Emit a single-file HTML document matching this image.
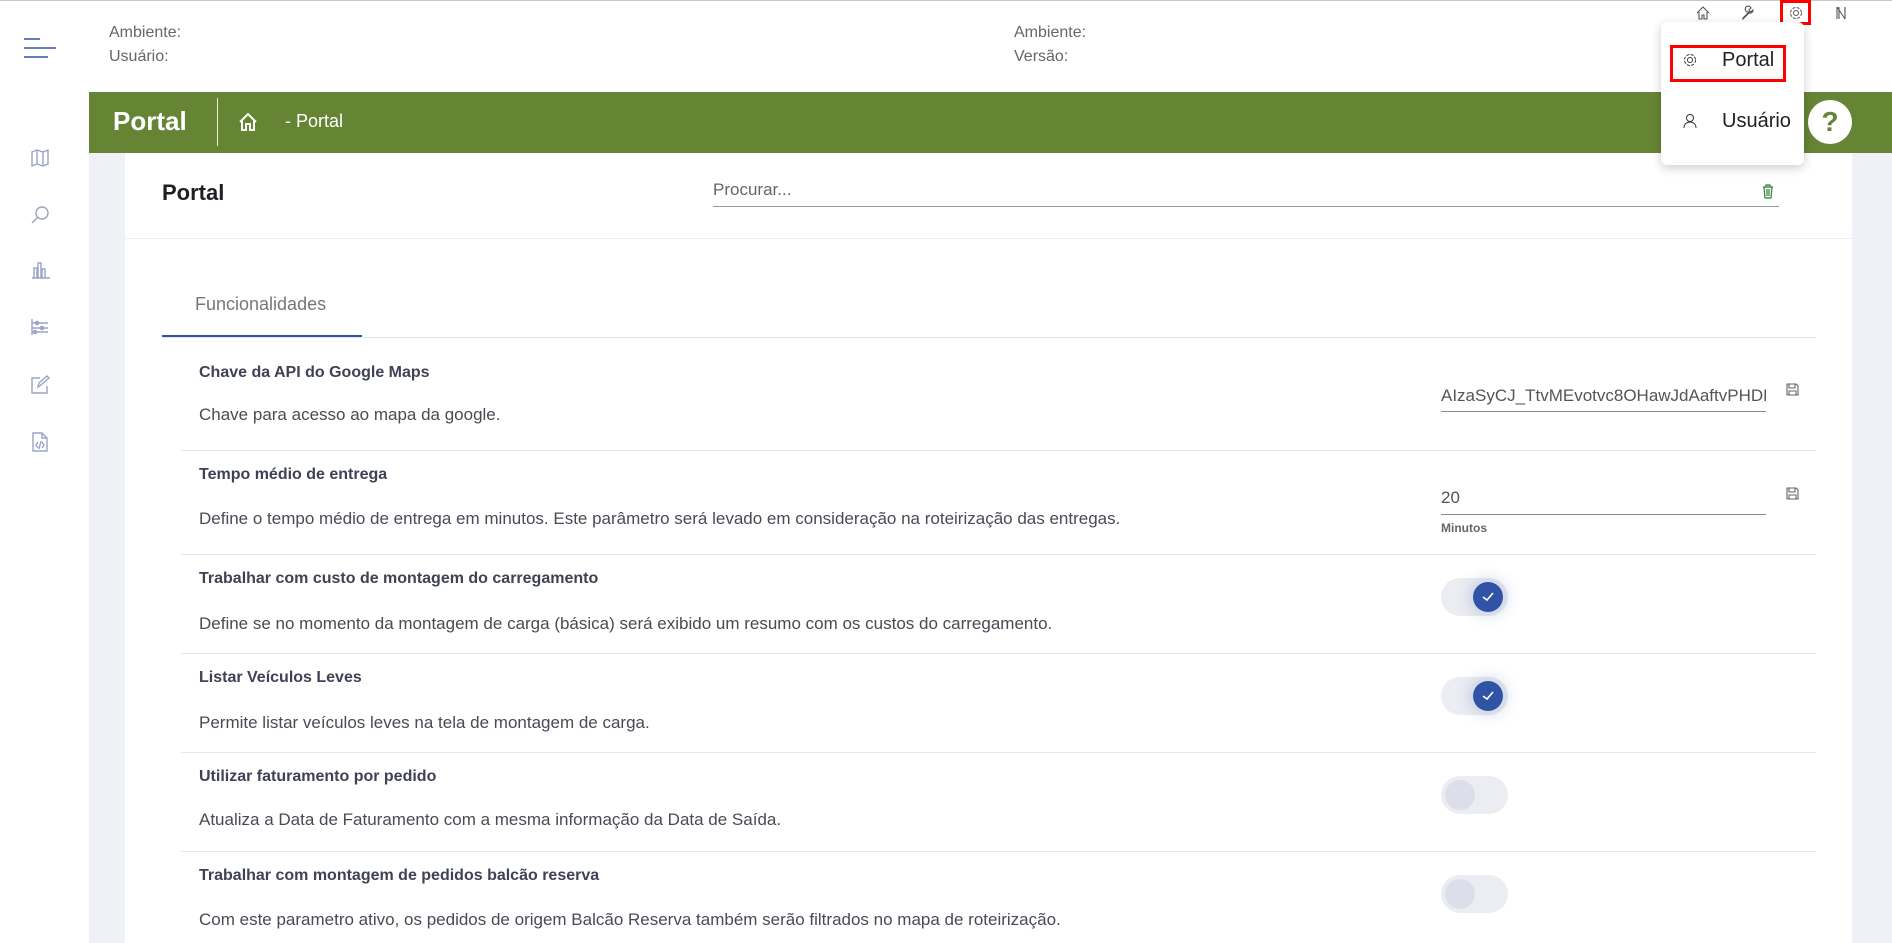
<!DOCTYPE html>
<html><head><meta charset="utf-8"><style>
*{margin:0;padding:0;box-sizing:border-box}
body{width:1892px;height:943px;overflow:hidden;background:#f0f1f6;font-family:"Liberation Sans",sans-serif;position:relative;color:#3f4254}
.a{position:absolute}
.hdr{left:0;top:0;width:1892px;height:92px;background:#fff;border-top:1px solid #c8c8c8}
.side{left:0;top:92px;width:89px;height:851px;background:#fff}
.lbl{font-size:16px;color:#666}
.green{left:89px;top:92px;width:1803px;height:61px;background:#658535}
.card{left:125px;top:153px;width:1727px;height:790px;background:#fff}
.title{font-size:16px;font-weight:bold;color:#3f4254}
.desc{font-size:17px;color:#4a4a55}
.sep{left:181px;width:1635px;height:1px;background:#e6e7ec}
.tog{width:67px;height:38px;border-radius:19px;background:#ecedf3}
.tog .k{position:absolute;top:4px;width:30px;height:30px;border-radius:50%}
.on .k{left:32px;background:#3053a6;box-shadow:0 0 14px 4px rgba(48,83,166,.2)}
.off .k{left:4px;background:#dcdfe9}
.ico{stroke:#9aa3c7;fill:none;stroke-width:1.4}
</style></head><body>
<div class="a hdr"></div>
<svg class="a" style="left:22px;top:36px" width="34" height="24"><path d="M2 3h16M2 12h32M2 21h24" stroke="#3053a6" stroke-width="1.5"/></svg>
<div class="a lbl" style="left:109px;top:24px">Ambiente:</div>
<div class="a lbl" style="left:109px;top:48px">Usuário:</div>
<div class="a lbl" style="left:1014px;top:24px">Ambiente:</div>
<div class="a lbl" style="left:1014px;top:48px">Versão:</div>
<svg class="a" style="left:1695px;top:5px" width="16" height="16"><path d="M2 8L8 2l6 6M4 7v7h3v-4h2v4h3V7" stroke="#555" fill="none" stroke-width="1.1"/></svg>
<svg class="a" style="left:1740px;top:5px" width="16" height="16"><path d="M3 13l6-6a3 3 0 1 1 2 -4l-2 2 1 2 2-1 1-1a3 3 0 0 1-4 3l-6 6z" stroke="#555" fill="none" stroke-width="1.1"/></svg>
<div class="a" style="left:1780px;top:0;width:31px;height:25px;border:3px solid #f00"></div>
<svg class="a" style="left:1788px;top:5px" width="16" height="16"><circle cx="8" cy="8" r="2.5" stroke="#555" fill="none"/><circle cx="8" cy="8" r="5.5" stroke="#555" fill="none" stroke-dasharray="3 1.4"/></svg>
<svg class="a" style="left:1834px;top:5px" width="14" height="16"><path d="M3 2v12M5 2v12M11 2v12M3 2l8 12" stroke="#555" fill="none" stroke-width="1.1"/></svg>
<div class="a side"></div>
<svg class="a" style="left:30px;top:148px" width="20" height="20"><path class="ico" d="M2 4l5-2 6 2 5-2v14l-5 2-6-2-5 2zM7 2v14M13 4v14"/></svg>
<svg class="a" style="left:30px;top:205px" width="20" height="20"><circle class="ico" cx="12" cy="8" r="6"/><path class="ico" d="M8 12l-6 6"/></svg>
<svg class="a" style="left:30px;top:260px" width="20" height="20"><path class="ico" d="M2 18h18M4 18V8h3v10M8 18V3h3v15M12 18V9h3v9" /></svg>
<svg class="a" style="left:30px;top:317px" width="20" height="20"><path class="ico" d="M2 2v16M2 6h16M2 11h16M2 15h16"/><circle class="ico" cx="7" cy="6" r="1.6"/><circle class="ico" cx="12" cy="11" r="1.6"/><circle class="ico" cx="5" cy="15" r="1.6"/></svg>
<svg class="a" style="left:30px;top:375px" width="20" height="20"><path class="ico" d="M10 3H2v15h15v-7M8 12l1-4 8-7 2 2-8 7z"/></svg>
<svg class="a" style="left:31px;top:432px" width="18" height="20"><path class="ico" d="M2 1h9l5 5v13H2zM11 1v5h5M7 10l-2 3 2 3M11 10l2 3-2 3M10 9l-2 8"/></svg>
<div class="a green"></div>
<div class="a" style="left:113px;top:106px;font-size:26px;font-weight:bold;color:#fff">Portal</div>
<div class="a" style="left:217px;top:98px;width:1px;height:48px;background:#e8eedc"></div>
<svg class="a" style="left:238px;top:112px" width="20" height="20"><path d="M2 10L10 2l8 8M4 8v10h4v-6h4v6h4V8" stroke="#fff" fill="none" stroke-width="2"/></svg>
<div class="a" style="left:285px;top:111px;font-size:18px;color:#fff">- Portal</div>
<div class="a" style="left:1808px;top:100px;width:44px;height:44px;border-radius:50%;background:#fff;color:#658535;font-size:28px;font-weight:bold;text-align:center;line-height:44px">?</div>
<div class="a card"></div>
<div class="a" style="left:162px;top:180px;font-size:22px;font-weight:bold;color:#1e1e24">Portal</div>
<div class="a" style="left:713px;top:180px;font-size:17px;color:#666">Procurar...</div>
<div class="a" style="left:713px;top:206px;width:1066px;height:1px;background:#999"></div>
<svg class="a" style="left:1762px;top:184px" width="12" height="15"><path d="M1 3h10M4 3V1h4v2M2 3l1 11h6l1-11M5 5v7M7 5v7" stroke="#2e7d32" fill="none" stroke-width="1.2"/></svg>
<div class="a" style="left:125px;top:238px;width:1727px;height:1px;background:#eceef2"></div>
<div class="a" style="left:195px;top:294px;font-size:18px;color:#777">Funcionalidades</div>
<div class="a" style="left:162px;top:337px;width:1654px;height:1px;background:#e3e4e8"></div>
<div class="a" style="left:162px;top:335px;width:200px;height:2px;background:#3053a6"></div>

<div class="a title" style="left:199px;top:364px">Chave da API do Google Maps</div>
<div class="a desc" style="left:199px;top:405px">Chave para acesso ao mapa da google.</div>
<div class="a desc" style="left:1441px;top:386px;width:325px;overflow:hidden;white-space:nowrap;font-size:17px;color:#555">AIzaSyCJ_TtvMEvotvc8OHawJdAaftvPHDFxyz</div>
<div class="a" style="left:1441px;top:411px;width:325px;height:1px;background:#888"></div>
<svg class="a" style="left:1786px;top:383px" width="13" height="13"><path d="M1 1h9l2 2v9H1zM3 1v4h6V1M3 12V8h7v4" stroke="#666" fill="none" stroke-width="1.1"/></svg>
<div class="a sep" style="top:450px"></div>

<div class="a title" style="left:199px;top:466px">Tempo médio de entrega</div>
<div class="a desc" style="left:199px;top:509px">Define o tempo médio de entrega em minutos. Este parâmetro será levado em consideração na roteirização das entregas.</div>
<div class="a desc" style="left:1441px;top:488px;font-size:17px;color:#555">20</div>
<div class="a" style="left:1441px;top:514px;width:325px;height:1px;background:#888"></div>
<div class="a" style="left:1441px;top:521px;font-size:12px;font-weight:bold;color:#666">Minutos</div>
<svg class="a" style="left:1786px;top:487px" width="13" height="13"><path d="M1 1h9l2 2v9H1zM3 1v4h6V1M3 12V8h7v4" stroke="#666" fill="none" stroke-width="1.1"/></svg>
<div class="a sep" style="top:554px"></div>

<div class="a title" style="left:199px;top:570px">Trabalhar com custo de montagem do carregamento</div>
<div class="a desc" style="left:199px;top:614px">Define se no momento da montagem de carga (básica) será exibido um resumo com os custos do carregamento.</div>
<div class="a tog on" style="left:1441px;top:578px"><div class="k"><svg width="30" height="30"><path d="M10 15l4 3 6-7" stroke="#fff" fill="none" stroke-width="1.6"/></svg></div></div>
<div class="a sep" style="top:653px"></div>

<div class="a title" style="left:199px;top:669px">Listar Veículos Leves</div>
<div class="a desc" style="left:199px;top:713px">Permite listar veículos leves na tela de montagem de carga.</div>
<div class="a tog on" style="left:1441px;top:677px"><div class="k"><svg width="30" height="30"><path d="M10 15l4 3 6-7" stroke="#fff" fill="none" stroke-width="1.6"/></svg></div></div>
<div class="a sep" style="top:752px"></div>

<div class="a title" style="left:199px;top:768px">Utilizar faturamento por pedido</div>
<div class="a desc" style="left:199px;top:810px">Atualiza a Data de Faturamento com a mesma informação da Data de Saída.</div>
<div class="a tog off" style="left:1441px;top:776px"><div class="k"></div></div>
<div class="a sep" style="top:851px"></div>

<div class="a title" style="left:199px;top:867px">Trabalhar com montagem de pedidos balcão reserva</div>
<div class="a desc" style="left:199px;top:910px">Com este parametro ativo, os pedidos de origem Balcão Reserva também serão filtrados no mapa de roteirização.</div>
<div class="a tog off" style="left:1441px;top:875px"><div class="k"></div></div>

<div class="a" style="left:1661px;top:22px;width:143px;height:143px;background:#fff;border-radius:6px;box-shadow:0 3px 10px rgba(0,0,0,.2)"></div>
<div class="a" style="left:1670px;top:45px;width:116px;height:37px;border:3px solid #f00"></div>
<svg class="a" style="left:1682px;top:52px" width="16" height="16"><circle cx="8" cy="8" r="2.5" stroke="#333" fill="none"/><circle cx="8" cy="8" r="5.5" stroke="#333" fill="none" stroke-dasharray="3 1.4"/></svg>
<div class="a" style="left:1722px;top:49px;font-size:20px;color:#222">Portal</div>
<svg class="a" style="left:1683px;top:113px" width="14" height="16"><circle cx="7" cy="5" r="3.5" stroke="#333" fill="none"/><path d="M1 15c0-4 3-6 6-6s6 2 6 6" stroke="#333" fill="none"/></svg>
<div class="a" style="left:1722px;top:110px;font-size:20px;color:#222">Usuário</div>
</body></html>
